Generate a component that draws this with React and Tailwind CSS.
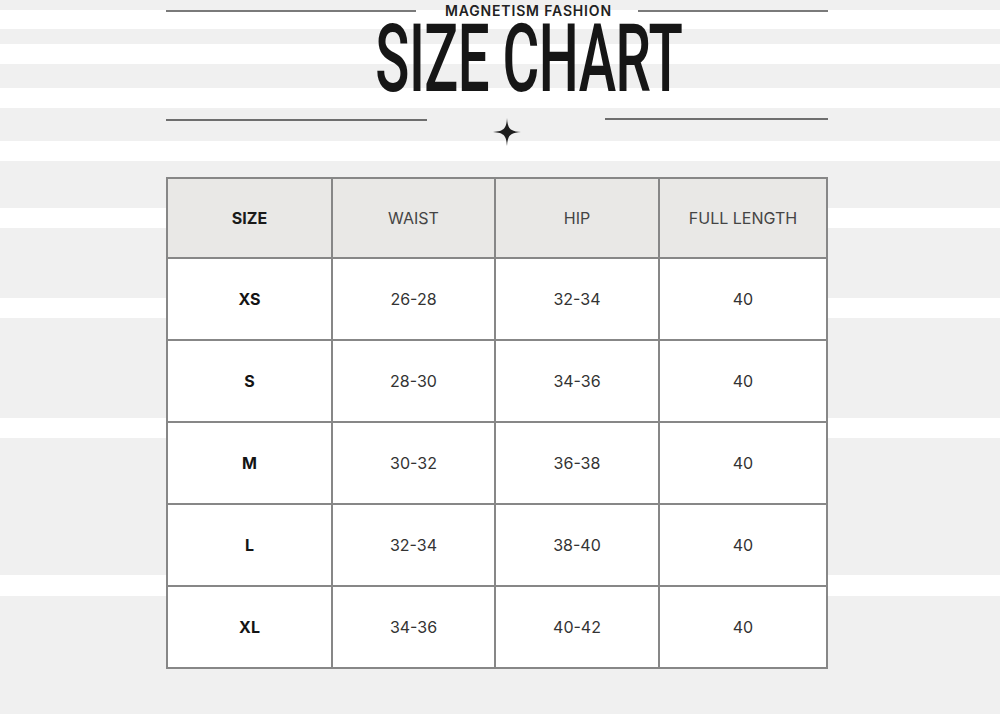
const headers = ['SIZE', 'WAIST', 'HIP', 'FULL LENGTH']

const rows = [
  ['XS', '26-28', '32-34', '40'],
  ['S', '28-30', '34-36', '40'],
  ['M', '30-32', '36-38', '40'],
  ['L', '32-34', '38-40', '40'],
  ['XL', '34-36', '40-42', '40'],
]

function Sparkle() {
  return (
    <svg width="28" height="28" viewBox="0 0 28 28" className="block">
      <path
        d="M14 0 C14.6 10 16.5 13.2 28 14 C16.5 14.8 14.6 18 14 28 C13.4 18 11.5 14.8 0 14 C11.5 13.2 13.4 10 14 0 Z"
        fill="#1e1e1e"
      />
    </svg>
  )
}

export default function App() {
  return (
    <div className="h-[714px] w-full overflow-hidden bg-[#f0f0f0] bg-[linear-gradient(to_bottom,#f0f0f0_0px,#f0f0f0_10px,#ffffff_10px,#ffffff_29px,#f0f0f0_29px,#f0f0f0_44px,#ffffff_44px,#ffffff_64px,#f0f0f0_64px,#f0f0f0_88px,#ffffff_88px,#ffffff_108px,#f0f0f0_108px,#f0f0f0_141px,#ffffff_141px,#ffffff_161px,#f0f0f0_161px,#f0f0f0_208px,#ffffff_208px,#ffffff_228px,#f0f0f0_228px,#f0f0f0_298px,#ffffff_298px,#ffffff_318px,#f0f0f0_318px,#f0f0f0_418px,#ffffff_418px,#ffffff_438px,#f0f0f0_438px,#f0f0f0_575px,#ffffff_575px,#ffffff_596px,#f0f0f0_596px,#f0f0f0_100%)] font-['Inter',sans-serif]">
      <div className="ml-[166px] w-[662px]">
        {/* brand line */}
        <div className="flex h-[22px] items-center">
          <div className="h-[2px] w-[250px] bg-[#7a7a7a]" />
          <span className="ml-[29px] text-[14px] font-semibold leading-none tracking-[0.06em] text-[#222]">
            MAGNETISM FASHION
          </span>
          <div className="ml-[26px] h-[2px] flex-1 bg-[#7a7a7a]" />
        </div>

        {/* big title */}
        <div className="flex h-[80px] justify-center pl-[64px]">
          <h1 className="inline-block origin-center scale-x-[0.6] font-['Roboto',sans-serif] text-[94px] font-medium leading-[74px] tracking-[-0.01em] text-[#161616]">
            SIZE CHART
          </h1>
        </div>

        {/* divider with sparkle */}
        <div className="mt-[16px] flex h-[28px] items-start">
          <div className="mt-[1px] h-[2px] w-[261px] bg-[#6e6e6e]" />
          <div className="ml-[66px]">
            <Sparkle />
          </div>
          <div className="ml-[84px] h-[2px] flex-1 bg-[#6e6e6e]" />
        </div>

        {/* table */}
        <div className="mt-[31px] grid grid-cols-[165px_163px_164px_168px] border-l-2 border-t-2 border-[#878787]">
          {headers.map((h, i) => (
            <div
              key={h}
              className={
                i === 0
                  ? 'flex h-[80px] items-center justify-center border-b-2 border-r-2 border-[#878787] bg-[#e9e8e6] text-[16px] font-bold text-[#1a1a1a]'
                  : 'flex h-[80px] items-center justify-center border-b-2 border-r-2 border-[#878787] bg-[#e9e8e6] text-[16px] text-[#444]'
              }
            >
              {h}
            </div>
          ))}
          {rows.map((row) =>
            row.map((cell, i) => (
              <div
                key={row[0] + i}
                className={
                  i === 0
                    ? 'flex h-[82px] items-center justify-center border-b-2 border-r-2 border-[#878787] bg-white text-[16px] font-bold text-[#141414]'
                    : 'flex h-[82px] items-center justify-center border-b-2 border-r-2 border-[#878787] bg-white text-[16px] text-[#333]'
                }
              >
                {cell}
              </div>
            ))
          )}
        </div>
      </div>
    </div>
  )
}
